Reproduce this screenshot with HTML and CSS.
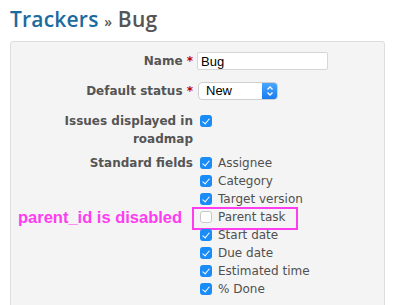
FILE: index.html
```html
<!DOCTYPE html>
<html>
<head>
  <title>Trackers » Bug</title>
  <link rel="stylesheet" href="styles.css">
</head>
<body>
  <h2 class="title"><a href="#">Trackers</a> <span class="sep">»</span> Bug</h2>

  <div class="box">
    <div class="row">
      <label class="lbl">Name <span class="req">*</span></label>
      <input class="text" type="text" value="Bug">
    </div>

    <div class="row">
      <label class="lbl">Default status <span class="req">*</span></label>
      <div class="select">
        <span class="sel-value">New</span>
        <span class="sel-arrow">
          <svg width="8" height="12" viewBox="0 0 8 12"><path d="M1.5 4.5 L4 2 L6.5 4.5 M1.5 7.5 L4 10 L6.5 7.5" fill="none" stroke="#fff" stroke-width="1.3"/></svg>
        </span>
      </div>
    </div>

    <div class="row tight">
      <label class="lbl">Issues displayed in roadmap</label>
      <span class="cb on"></span>
    </div>

    <div class="row">
      <label class="lbl">Standard fields</label>
      <ul class="fields">
        <li><span class="cb on"></span>Assignee</li>
        <li><span class="cb on"></span>Category</li>
        <li><span class="cb on"></span>Target version</li>
        <li class="marked"><span class="cb"></span>Parent task
          <span class="note">parent_id is disabled</span>
        </li>
        <li><span class="cb on"></span>Start date</li>
        <li><span class="cb on"></span>Due date</li>
        <li><span class="cb on"></span>Estimated time</li>
        <li><span class="cb on"></span>% Done</li>
      </ul>
    </div>
  </div>
</body>
</html>
```

FILE: styles.css
```css
body {
  font-family: "DejaVu Sans", Verdana, sans-serif;
  font-size: 12px;
  color: #505050;
  background-color: #fff;
  margin: 0;
  padding: 0 10px;
}

.title {
  font-family: "Open Sans", sans-serif;
  font-weight: 600;
  font-size: 21px;
  color: #555;
  margin: 0;
  padding-top: 5px;
  line-height: 28px;
  height: 36px;
  letter-spacing: 0.2px;
}

.title a {
  color: #1b6aa0;
  text-decoration: none;
}

.sep {
  font-size: 14px;
}

.box {
  background-color: #f4f4f4;
  border: 1px solid #dddddd;
  border-radius: 3px;
  padding: 10px 0 20px 0;
  height: 300px;
}

.row {
  display: flex;
  align-items: flex-start;
  margin-bottom: 12px;
}

.row.tight {
  margin-bottom: 6px;
}

.lbl {
  flex: none;
  width: 186px;
  box-sizing: border-box;
  padding-left: 40px;
  padding-right: 4px;
  text-align: right;
  font-weight: bold;
  color: #555;
  line-height: 18px;
}

.req {
  color: #bb0000;
}

.text {
  width: 131px;
  height: 18px;
  box-sizing: border-box;
  border: 1px solid #d6d6d6;
  border-radius: 2px;
  font-family: "Liberation Sans", Arial, sans-serif;
  font-size: 13px;
  padding: 0 3px;
  margin: 0;
  color: #000;
}

.select {
  display: flex;
  width: 80px;
  height: 18px;
  margin-left: 1px;
  box-sizing: border-box;
  border: 1px solid #cfcfcf;
  border-radius: 4px;
  background-color: #fff;
  overflow: hidden;
  font-family: "Liberation Sans", Arial, sans-serif;
  font-size: 13px;
  color: #000;
}

.sel-value {
  flex: 1;
  padding-left: 7px;
  line-height: 16px;
}

.sel-arrow {
  width: 15px;
  background: linear-gradient(#4aa6ff, #1a7df0);
  display: flex;
  align-items: center;
  justify-content: center;
}

.cb {
  display: inline-block;
  width: 12px;
  height: 12px;
  box-sizing: border-box;
  border-radius: 3px;
  border: 1px solid #c8c8c8;
  background-color: #fff;
  margin: 3px 6px 0 3px;
  vertical-align: top;
  position: relative;
}

.cb.on {
  border: none;
  background-color: #1a8cf7;
}

.cb.on::after {
  content: "";
  position: absolute;
  left: 4px;
  top: 2px;
  width: 3px;
  height: 6px;
  border-right: 1.5px solid #fff;
  border-bottom: 1.5px solid #fff;
  transform: rotate(40deg);
}

.fields {
  list-style: none;
  margin: 0;
  padding: 0;
}

.fields li {
  line-height: 18px;
  height: 18px;
}

.marked {
  position: relative;
}

.marked::after {
  content: "";
  position: absolute;
  left: -5px;
  top: -1px;
  width: 106px;
  height: 23px;
  box-sizing: border-box;
  border: 2px solid #ff3cf0;
}

.note {
  position: absolute;
  left: -179px;
  top: -1px;
  white-space: nowrap;
  font-family: "Liberation Sans", Arial, sans-serif;
  font-weight: bold;
  font-size: 16.5px;
  line-height: 20px;
  color: #ff3cf0;
}
```
